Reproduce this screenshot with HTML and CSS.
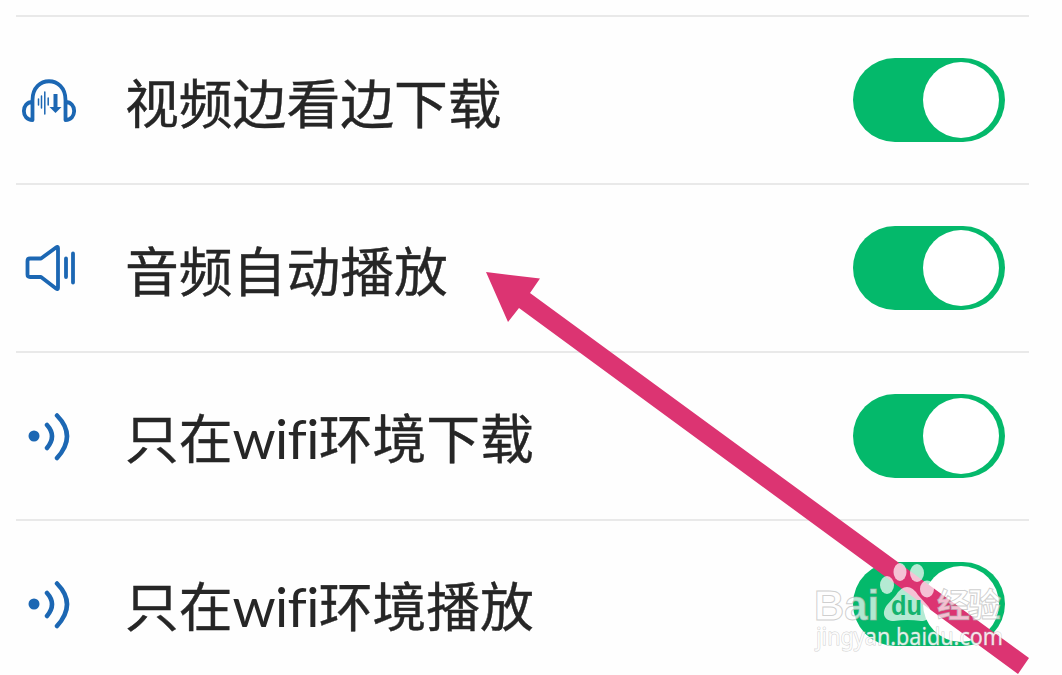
FILE: index.html
```html
<!DOCTYPE html>
<html lang="zh-CN">
    <head>
        <meta charset="UTF-8">
        <title>设置</title>
        <link rel="stylesheet" href="styles.css">
    </head>
    <body>
        <ul class="settings">
            <li class="row">
                <svg class="icon" viewBox="0 0 60 60">
                    <path d="M16.500 50V30C16.500 5 49.500 5 49.500 30V50M16.500 32C5 32 5 50 16.500 50ZM49.500 32C61 32 61 50 49.500 50Z"/>
                    <path class="thin" d="M22.500 29v6M25.500 26v12M28.800 22v22M32.200 28v7"/>
                    <path class="thick" d="M39.500 24v15"/>
                    <path class="solid" d="M33.500 37h12l-6 6z"/>
                </svg>
                <span class="label">视频边看边下载</span>
                <span class="switch on"></span>
            </li>
            <li class="row">
                <svg class="icon" viewBox="0 0 60 60">
                    <path d="M14 20.500H25L40 9.500Q42 8 42 10V50Q42 52 40 50.500L25 39H14Q11.500 39 11.500 36.500V23Q11.500 20.500 14 20.500Z"/>
                    <path d="M50 20.500v18.500M57 15.500v29"/>
                </svg>
                <span class="label">音频自动播放</span>
                <span class="switch on"></span>
            </li>
            <li class="row">
                <svg class="icon" viewBox="0 0 60 60">
                    <circle class="solid" cx="18" cy="30" r="5.500"/>
                    <path class="wave" d="M31 19Q41 30 31 42M41 9.500Q61 30 41 52"/>
                </svg>
                <span class="label">只在<span class="latin">wifi</span>环境下载</span>
                <span class="switch on"></span>
            </li>
            <li class="row">
                <svg class="icon" viewBox="0 0 60 60">
                    <circle class="solid" cx="18" cy="30" r="5.500"/>
                    <path class="wave" d="M31 19Q41 30 31 42M41 9.500Q61 30 41 52"/>
                </svg>
                <span class="label">只在<span class="latin">wifi</span>环境播放</span>
                <span class="switch on"></span>
            </li>
        </ul>

        <svg class="overlay" viewBox="0 0 1062 675">
            <polygon class="arrow" points="486,272 540,278.500 530,293 1029,658 1018,674 519,308 508,322"/>
            <g class="watermark">
                <text class="brand" x="814" y="620" textLength="65" lengthAdjust="spacingAndGlyphs">Bai</text>
                <ellipse cx="887" cy="585" rx="7" ry="9"/>
                <ellipse cx="900" cy="572" rx="6.500" ry="9"/>
                <ellipse cx="917" cy="573" rx="7" ry="9"/>
                <ellipse cx="927" cy="589" rx="7" ry="8.500"/>
                <path d="M907 587Q913 587 918 595L928 606C934 613 930 621 921 621Q907 619 894 621C884 621 881 613 887 605L896 595Q901 587 907 587Z"/>
                <text class="du" x="891" y="615" textLength="31" lengthAdjust="spacingAndGlyphs">du</text>
                <text class="jingyan" x="937" y="617" textLength="64">经验</text>
                <text class="site" x="816" y="645" textLength="187" lengthAdjust="spacingAndGlyphs">jingyan.baidu.com</text>
            </g>
        </svg>
    </body>
</html>
```

FILE: styles.css
```css
body {
    margin: 0;
    height: 675px;
    overflow: hidden;
    background-color: #fefefe;
    font-family: "Noto Sans CJK SC", sans-serif;
    color: #262626;
}

.settings {
    list-style: none;
    margin: 0;
    padding: 15px 33px 0 16px;
}

.row {
    display: flex;
    align-items: center;
    box-sizing: border-box;
    height: 168px;
    border-top: 2px solid #e9e9e9;
    padding-right: 24px;
}

.icon {
    width: 60px;
    height: 60px;
    fill: none;
    stroke: #1c67b3;
    stroke-width: 3.8;
    stroke-linecap: round;
    stroke-linejoin: round;
}

.icon .thin {
    stroke-width: 1.5;
}

.icon .thick {
    stroke-width: 4;
    stroke-linecap: butt;
}

.icon .wave {
    stroke-width: 4.5;
}

.icon .solid {
    fill: #1c67b3;
    stroke: none;
}

.label {
    flex: 1;
    margin-left: 49px;
    padding-top: 2px;
    font-size: 53.8px;
    line-height: 80px;
    white-space: nowrap;
    -webkit-text-stroke: 0.4px #262626;
}

.latin {
    font-family: Lato, sans-serif;
    font-size: 55px;
    letter-spacing: -0.7px;
    font-variant-ligatures: none;
    -webkit-text-stroke: 0;
}

.switch {
    box-sizing: border-box;
    width: 152px;
    height: 84px;
    padding: 4px 6px 4px 70px;
    border-radius: 42px;
    background-color: #04b96b;
}

.switch::before {
    content: "";
    display: block;
    width: 76px;
    height: 76px;
    border-radius: 50%;
    background-color: #fff;
}

.overlay {
    position: absolute;
    top: 0;
    left: 0;
    width: 1062px;
    height: 675px;
}

.arrow {
    fill: #dc3472;
}

.watermark {
    fill: rgba(255, 255, 255, 0.7);
}

.brand {
    font: bold 43px "Liberation Sans", sans-serif;
    stroke: rgba(175, 175, 175, 0.6);
}

.du {
    font: bold 28px "Liberation Sans", sans-serif;
    fill: #14b36e;
}

.jingyan {
    font-size: 33px;
    font-weight: bold;
    stroke: rgba(175, 175, 175, 0.6);
}

.site {
    font: 23.5px "Noto Sans", sans-serif;
    fill: rgba(255, 255, 255, 0.85);
    stroke: rgba(175, 175, 175, 0.6);
    stroke-width: 1;
    paint-order: stroke;
}
```
